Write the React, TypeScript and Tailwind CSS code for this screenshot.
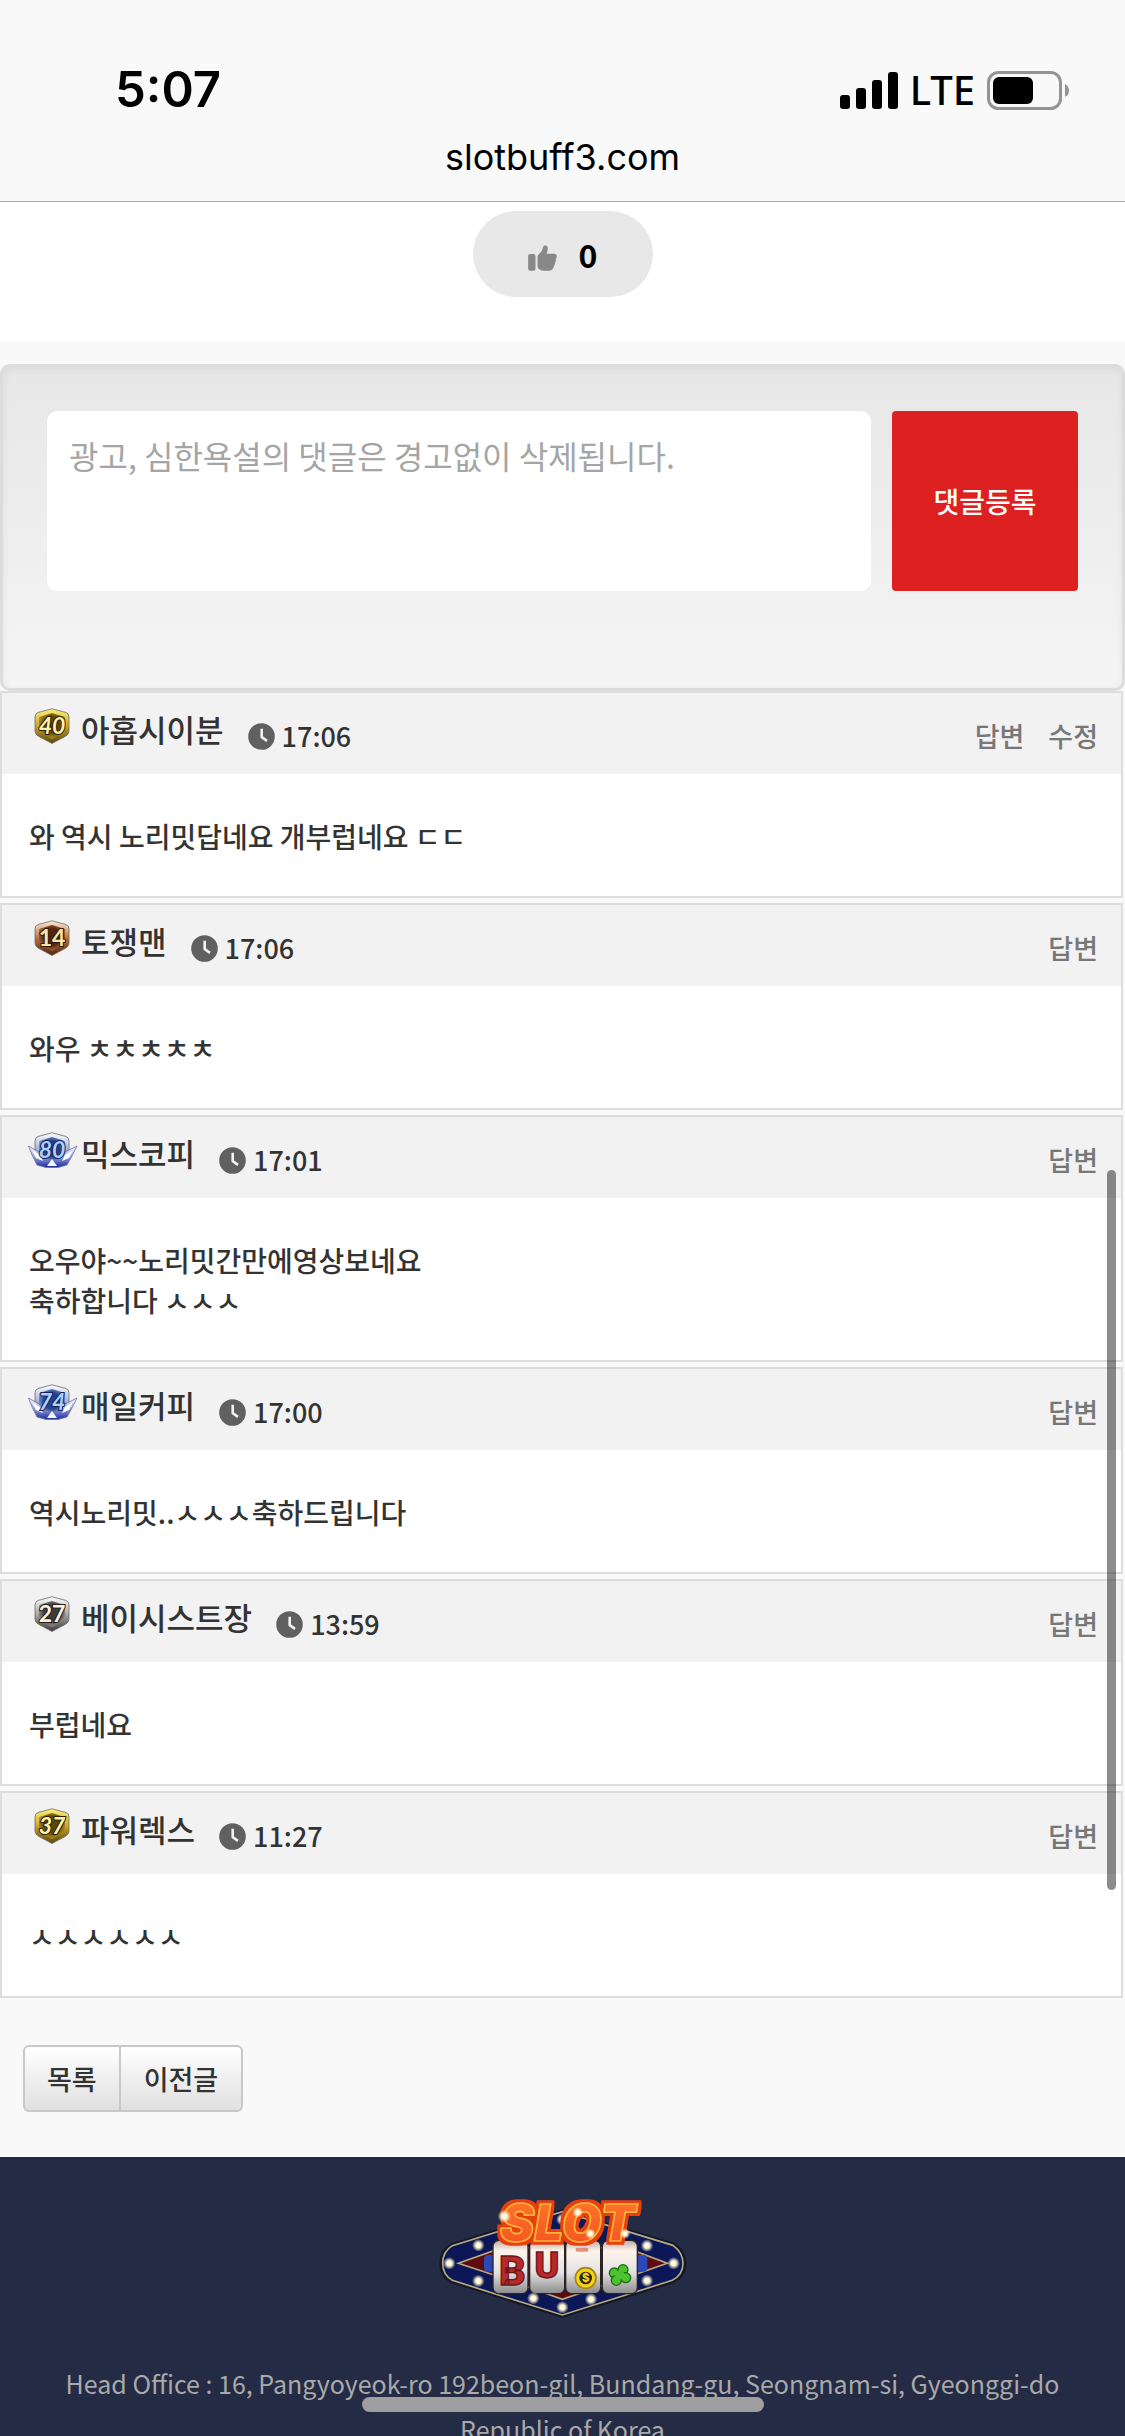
import React from 'react';

type BadgeTone = 'gold' | 'bronze' | 'silver' | 'blue';

interface Comment {
  id: number;
  author: string;
  level: number;
  tone: BadgeTone;
  time: string;
  lines: string[];
  editable?: boolean;
}

const comments: Comment[] = [
  { id: 1, author: '아홉시이분', level: 40, tone: 'gold', time: '17:06', lines: ['와 역시 노리밋답네요 개부럽네요 ㄷㄷ'], editable: true },
  { id: 2, author: '토쟁맨', level: 14, tone: 'bronze', time: '17:06', lines: ['와우 ㅊㅊㅊㅊㅊ'] },
  { id: 3, author: '믹스코피', level: 80, tone: 'blue', time: '17:01', lines: ['오우야~~노리밋간만에영상보네요', '축하합니다 ㅅㅅㅅ'] },
  { id: 4, author: '매일커피', level: 74, tone: 'blue', time: '17:00', lines: ['역시노리밋..ㅅㅅㅅ축하드립니다'] },
  { id: 5, author: '베이시스트장', level: 27, tone: 'silver', time: '13:59', lines: ['부럽네요'] },
  { id: 6, author: '파워렉스', level: 37, tone: 'gold', time: '11:27', lines: ['ㅅㅅㅅㅅㅅㅅ'] },
];

// light edge, mid, dark core, digit colour
const tones: Record<BadgeTone, [string, string, string, string]> = {
  gold: ['#fff07a', '#c9a52c', '#5a4608', '#fff3a8'],
  bronze: ['#fdeadb', '#b9713f', '#54230c', '#ffe2ae'],
  silver: ['#ffffff', '#a9a9a9', '#3c3c3c', '#f4f4f4'],
  blue: ['#ffffff', '#9db0e2', '#24408c', '#a9d0ff'],
};

const LevelBadge = ({ level, tone }: { level: number; tone: BadgeTone }) => {
  const [light, mid, dark, digit] = tones[tone];
  const id = `lv-${level}`;

  return (
    <svg viewBox="0 0 50 36" className="h-9 w-[50px] shrink-0" role="img" aria-label={`Lv.${level}`}>
      <defs>
        <linearGradient id={`${id}-rim`} x1="0" y1="0" x2="0" y2="1">
          <stop offset="0" stopColor={light} />
          <stop offset="0.5" stopColor={mid} />
          <stop offset="1" stopColor={dark} />
        </linearGradient>
        <radialGradient id={`${id}-core`} cx="0.5" cy="0.45" r="0.6">
          <stop offset="0" stopColor={dark} />
          <stop offset="0.5" stopColor={dark} />
          <stop offset="1" stopColor={mid} />
        </radialGradient>
        <linearGradient id={`${id}-wing`} x1="0" y1="0" x2="0" y2="1">
          <stop offset="0" stopColor="#ffffff" />
          <stop offset="0.4" stopColor="#aab6ee" />
          <stop offset="1" stopColor="#1c2a9a" />
        </linearGradient>
      </defs>
      <path d="M24 0.800 L38 4.500 Q41 5.500 41 9 V23 Q41 26 38 28 L24 35.500 L10 28 Q7 26 7 23 V9 Q7 5.500 10 4.500 Z" fill={`url(#${id}-rim)`} stroke="#6f6b64" strokeWidth="0.8" />
      <path d="M24 5 L37 9 V22 L33 26 L24 31 L15 26 L11 22 V9 Z" fill={`url(#${id}-core)`} />
      {tone === 'blue' && (
        <>
          <path d="M0.500 14 L11 20 L16 26 L24 28 L32 26 L37 20 L49 14 L44 24 L39 33 L30 35.500 H18 L9 33 L4.500 24 Z" fill={`url(#${id}-wing)`} stroke="#6d7398" strokeWidth="0.8" />
          <path d="M4 18 L12 23 L15 29 L8 26 Z M45 18 L37 23 L34 29 L41 26 Z" fill="#ffffff" />
          <path d="M24 27 L29 34 H19 Z" fill="#f2f6ff" />
        </>
      )}
      <text
        x="24"
        y="26"
        textAnchor="middle"
        fontFamily="Lato, sans-serif"
        fontWeight="700"
        fontStyle={level === 27 || level === 14 ? 'normal' : 'italic'}
        fontSize="23"
        fill={digit}
        stroke={tone === 'blue' ? '#14225c' : '#2a1c08'}
        strokeWidth="2"
        paintOrder="stroke"
      >
        {level}
      </text>
    </svg>
  );
};

const ClockIcon = () => (
  <svg viewBox="0 0 27 27" className="h-[27px] w-[27px] shrink-0" aria-hidden="true">
    <circle cx="13.5" cy="13.5" r="13.3" fill="#606060" />
    <path d="M13.700 5.800 V14.200 L19 17.800" fill="none" stroke="#f2f2f2" strokeWidth="2.6" strokeLinejoin="round" />
  </svg>
);

const ThumbIcon = () => (
  <svg viewBox="0 0 86 78" className="mt-2 h-[26px] w-[29px]" fill="#888888" aria-hidden="true">
    <rect x="0" y="27" width="22" height="50" rx="6" />
    <path d="M28 35 Q28 30 33 27 Q42 20 44 9 Q45 1 52 1 Q59 2 59 10 Q59 17 55 26 H78 Q86 27 86 34 Q86 39 83 42 Q85 48 81 52 Q82 59 77 62 Q77 69 73 72 Q71 77 64 77 H46 Q37 77 31 71 Q28 68 28 62 Z" />
  </svg>
);

const StatusBar = () => (
  <header className="shrink-0 border-b border-[#a8a8a8] bg-[#f9f9f9] pt-[60px] pb-[22px] font-[Inter,sans-serif] text-black">
    <div className="flex items-center justify-between pr-[56px] pl-[115px]">
      <div className="text-[49px] leading-[60px] font-semibold">5:07</div>
      <div className="flex items-center gap-3">
        <svg viewBox="0 0 58 37" className="h-[37px] w-[58px]" aria-label="signal">
          <rect x="0" y="23" width="10" height="14" rx="3" />
          <rect x="16" y="16" width="10" height="21" rx="3" />
          <rect x="32" y="8" width="10" height="29" rx="3" />
          <rect x="48" y="0" width="10" height="37" rx="3" />
        </svg>
        <span className="font-['Noto_Sans',sans-serif] text-[40px] leading-[58px] font-medium">LTE</span>
        <svg viewBox="0 0 82 39" className="h-[39px] w-[82px]" aria-label="battery">
          <rect x="1.5" y="1.500" width="72" height="36" rx="10" fill="none" stroke="#949494" strokeWidth="3" />
          <rect x="6" y="6" width="40" height="27" rx="6" />
          <path d="M78 13 Q82 15 82 19.500 Q82 24 78 26 Z" fill="#949494" />
        </svg>
      </div>
    </div>
    <div className="mt-[15px] text-center text-[36px] leading-[44px] font-normal">slotbuff3.com</div>
  </header>
);

const CommentForm = () => (
  <form className="mt-[23px] flex h-[327px] items-start gap-[21px] rounded-[10px] border-[3px] border-[#dcdcdc] bg-linear-to-b from-[#e7e7e7] to-[#f5f5f5] px-11 pt-11 shadow-[inset_0_2px_8px_rgba(0,0,0,0.06)]">
    <textarea
      aria-label="댓글"
      placeholder="광고, 심한욕설의 댓글은 경고없이 삭제됩니다."
      className="h-[180px] min-w-0 flex-1 resize-none rounded-[10px] bg-white px-[22px] py-[22px] text-[32px] leading-[45px] font-normal placeholder:text-[#a5a5a5]"
    />
    <button type="button" className="h-[180px] w-[186px] shrink-0 rounded-[4px] bg-[#dd2121] text-[28px] font-medium text-white">
      댓글등록
    </button>
  </form>
);

const CommentCard = ({ comment }: { comment: Comment }) => (
  <li className="mr-[2px] border-2 border-[#dddddd] bg-white">
    <div className="flex h-[81px] items-center justify-between bg-[#f2f2f2] pr-[23px] pl-[26px]">
      <div className="flex items-center">
        <div className="pb-4">
          <LevelBadge level={comment.level} tone={comment.tone} />
        </div>
        <span className="ml-[3px] pb-[10px] text-[31px] leading-[40px]">{comment.author}</span>
        <div className="ml-6 flex items-center gap-[7px] text-[27px] leading-[36px]">
          <span className="pt-[6px]">
            <ClockIcon />
          </span>
          <time className="pt-1">{comment.time}</time>
        </div>
      </div>
      <div className="flex gap-6 pt-1 text-[27px] leading-[36px] text-[#777777]">
        <a href="#reply">답변</a>
        {comment.editable && <a href="#edit">수정</a>}
      </div>
    </div>
    <div className="px-[27px] pt-[42px] pb-10 text-[28px] leading-[40px]">
      {comment.lines.map((line) => (
        <p key={line}>{line}</p>
      ))}
    </div>
  </li>
);

const bulbs = [
  [91, 247], [178, 193], [178, 300], [343, 352], [430, 379], [516, 355], [684, 299], [764, 247], [684, 194], [430, 115],
];

const Logo = () => (
  <svg viewBox="57 57 747 357" className="h-[119px] w-[249px] overflow-visible" role="img" aria-label="Slot Buff">
    <defs>
      <linearGradient id="reel" x1="0" y1="0" x2="0" y2="1">
        <stop offset="0" stopColor="#b9a9a6" />
        <stop offset="0.2" stopColor="#fff4ec" />
        <stop offset="0.6" stopColor="#e2e2e2" />
        <stop offset="1" stopColor="#8b8b8b" />
      </linearGradient>
      <radialGradient id="bulb">
        <stop offset="0" stopColor="#ffffff" />
        <stop offset="0.4" stopColor="#fff6cf" />
        <stop offset="1" stopColor="#fff6cf" stopOpacity="0" />
      </radialGradient>
      <linearGradient id="flame" x1="0" y1="0" x2="0" y2="1">
        <stop offset="0" stopColor="#ff7a2e" />
        <stop offset="1" stopColor="#f4501c" />
      </linearGradient>
      <filter id="glow" x="-10%" y="-20%" width="120%" height="140%">
        <feMorphology in="SourceAlpha" operator="dilate" radius="8" result="fat" />
        <feFlood floodColor="#e8400f" />
        <feComposite in2="fat" operator="in" />
        <feMerge>
          <feMergeNode />
          <feMergeNode in="SourceGraphic" />
        </feMerge>
      </filter>
    </defs>
    <path d="M430 92 L765 192 Q795 215 795 247 Q795 285 760 300 L430 404 L100 300 Q68 285 68 247 Q68 210 100 193 Z" fill="#0a1550" stroke="#151727" strokeWidth="14" />
    <path d="M430 92 L762 193 Q792 215 792 247 Q792 282 760 298 L430 402 L100 298 Q71 282 71 247 Q71 212 100 194 Z" fill="#0b1757" stroke="#b5a982" strokeWidth="5" />
    <path d="M118 247 L250 200 H620 L745 247 L620 290 L430 355 L250 290 Z" fill="#5e0c10" stroke="#b5a982" strokeWidth="5" />
    <rect x="195" y="222" width="40" height="50" rx="12" fill="#2a49b8" />
    <rect x="645" y="222" width="40" height="50" rx="12" fill="#2a49b8" />
    {[222, 332, 440, 550].map((x) => (
      <rect key={x} x={x} y="178" width="105" height="160" rx="18" fill="url(#reel)" stroke="#2b2326" strokeWidth="4" />
    ))}
    <text x="280" y="312" textAnchor="middle" fontFamily="Roboto, sans-serif" fontWeight="900" fontSize="124" fill="#b8292b" stroke="#6d1517" strokeWidth="4">B</text>
    <text x="384" y="290" textAnchor="middle" fontFamily="Roboto, sans-serif" fontWeight="900" fontSize="112" fill="#b8292b" stroke="#6d1517" strokeWidth="4">U</text>
    <rect x="470" y="200" width="38" height="12" rx="5" fill="#d8674f" opacity="0.7" />
    <circle cx="500" cy="291" r="31" fill="#f3d320" stroke="#a8860c" strokeWidth="5" />
    <circle cx="500" cy="291" r="19" fill="#2d2a08" />
    <text x="500" y="303" textAnchor="middle" fontFamily="Inter, sans-serif" fontWeight="800" fontSize="34" fill="#f3d320">$</text>
    <g fill="#4cc22e" stroke="#1d6b14" strokeWidth="4">
      <circle cx="586" cy="276" r="15" />
      <circle cx="612" cy="266" r="15" />
      <circle cx="620" cy="290" r="15" />
      <circle cx="592" cy="298" r="15" />
    </g>
    <circle cx="602" cy="282" r="14" fill="#4cc22e" />
    {bulbs.map(([x, y]) => (
      <circle key={`${x}-${y}`} cx={x} cy={y} r="19" fill="url(#bulb)" />
    ))}
    <text
      x="446"
      y="180"
      textAnchor="middle"
      fontFamily="Inter, sans-serif"
      fontWeight="900"
      fontStyle="italic"
      fontSize="154"
      fill="url(#flame)"
      stroke="#ffb23c"
      strokeWidth="5"
      strokeLinejoin="round"
      filter="url(#glow)"
    >
      SLOT
    </text>
    <g fill="url(#bulb)">
      <circle cx="256" cy="106" r="20" />
      <circle cx="476" cy="94" r="16" />
      <circle cx="514" cy="158" r="16" />
      <circle cx="618" cy="158" r="16" />
    </g>
  </svg>
);

export default function App() {
  return (
    <div className="relative flex h-screen flex-col overflow-hidden bg-[#f9f9f9] font-['Noto_Sans_CJK_KR',sans-serif] font-medium text-[#333333]">
      <StatusBar />

      <main className="shrink-0">
        <div className="flex h-[139px] justify-center bg-white pt-[9px]">
          <button type="button" aria-label="추천" className="flex h-[86px] w-[180px] items-center justify-center gap-[22px] rounded-full bg-[#e8e8e8]">
            <ThumbIcon />
            <span className="text-[32px] leading-[40px] font-bold text-black">0</span>
          </button>
        </div>

        <CommentForm />

        <ul className="flex flex-col gap-[5px]">
          {comments.map((comment) => (
            <CommentCard key={comment.id} comment={comment} />
          ))}
        </ul>

        <div className="flex px-[23px] pt-[47px] pb-[45px] text-[27px] leading-[63px]">
          <button type="button" className="rounded-l-[6px] border-2 border-[#c8c8c8] bg-linear-to-b from-white to-[#e0e0e0] px-[22px]">
            목록
          </button>
          <button type="button" className="-ml-[2px] rounded-r-[6px] border-2 border-[#c8c8c8] bg-linear-to-b from-white to-[#e0e0e0] px-[23px]">
            이전글
          </button>
        </div>
      </main>

      <footer className="flex flex-1 shrink-0 flex-col items-center bg-[#232b45] px-11 pt-[43px] text-[#a9a9a9]">
        <Logo />
        <p className="mt-[41px] text-center text-[25px] leading-[46px] font-normal">
          Head Office : 16, Pangyoyeok-ro 192beon-gil, Bundang-gu, Seongnam-si, Gyeonggi-do
          <br />
          Republic of Korea
        </p>
      </footer>

      <div className="absolute top-[1170px] right-[9px] h-[720px] w-[9px] rounded-full bg-black/45" />
      <div className="absolute bottom-[24px] left-1/2 h-[15px] w-[402px] -translate-x-1/2 rounded-full bg-[#9f9f9f]" />
    </div>
  );
}
